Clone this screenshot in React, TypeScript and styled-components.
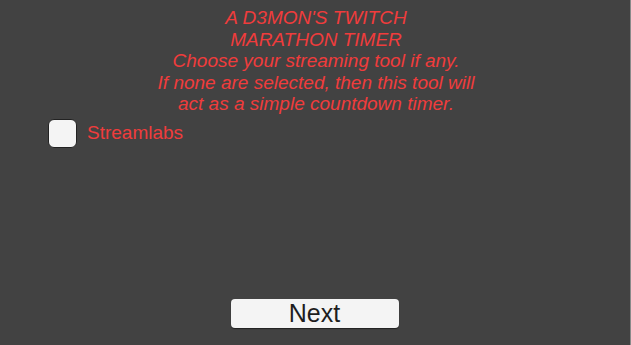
import React, { useState } from "react";
import styled, { createGlobalStyle } from "styled-components";

const Global = createGlobalStyle`
  html, body { margin: 0; padding: 0; background: #424242; }
  #root { height: 345px; }
`;

const Page = styled.div`
  box-sizing: border-box;
  width: 631px;
  height: 345px;
  background: #424242;
  border-right: 1px solid #8a8a8a;
  display: flex;
  flex-direction: column;
  font-family: "Liberation Sans", Arial, sans-serif;
  overflow: hidden;
`;

const Title = styled.div`
  margin-top: 7px;
  padding-left: 2px;
  text-align: center;
  color: #f03c3c;
  font-style: italic;
  font-size: 19px;
  line-height: 21.5px;
`;

const OptionRow = styled.label`
  display: flex;
  align-items: center;
  gap: 10px;
  margin: 4px 0 0 48px;
  cursor: pointer;
`;

const Box = styled.span<{ $checked: boolean }>`
  box-sizing: border-box;
  width: 29px;
  height: 29px;
  border-radius: 6px;
  background: #f4f4f4;
  border: 1.5px solid #222;
  display: flex;
  align-items: center;
  justify-content: center;
  color: #333;
  font-size: 18px;
`;

const OptionText = styled.span`
  color: #f03c3c;
  font-size: 19px;
`;

const Footer = styled.div`
  margin-top: auto;
  display: flex;
  justify-content: center;
  padding-bottom: 17px;
`;

const NextButton = styled.button`
  box-sizing: border-box;
  width: 168px;
  height: 29px;
  margin-left: -1px;
  border: none;
  border-radius: 4px;
  background: #f4f4f4;
  box-shadow: 0 1px 1px rgba(0, 0, 0, 0.5);
  color: #1e1e1e;
  font-family: "Liberation Sans", Arial, sans-serif;
  font-size: 25px;
  line-height: 29px;
  padding: 0;
  cursor: pointer;
`;

export default function App() {
  const [checked, setChecked] = useState(false);
  return (
    <>
      <Global />
      <Page>
        <Title>
          A D3MON'S TWITCH
          <br />
          MARATHON TIMER
          <br />
          Choose your streaming tool if any.
          <br />
          If none are selected, then this tool will
          <br />
          act as a simple countdown timer.
        </Title>
        <OptionRow onClick={() => setChecked(!checked)}>
          <Box $checked={checked}>{checked ? "✓" : ""}</Box>
          <OptionText>Streamlabs</OptionText>
        </OptionRow>
        <Footer>
          <NextButton>Next</NextButton>
        </Footer>
      </Page>
    </>
  );
}
